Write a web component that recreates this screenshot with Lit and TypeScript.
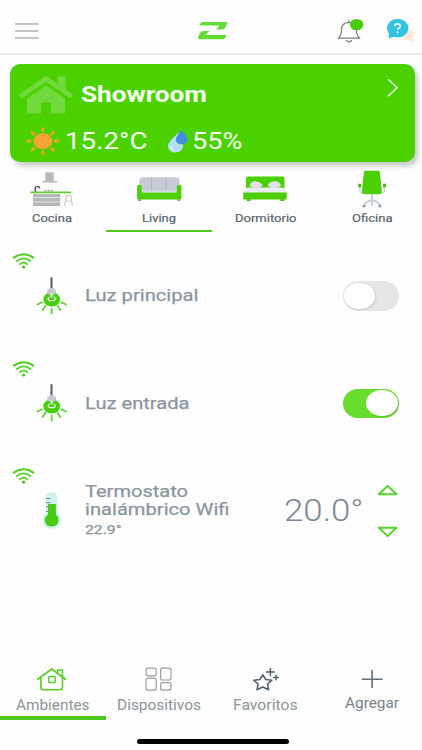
import { LitElement, html, css, svg } from "lit";
import { customElement, property } from "lit/decorators.js";

/** One line of text stretched horizontally to a given width. */
@customElement("wide-text")
class WideText extends LitElement {
  @property() text = "";
  @property({ type: Number }) width = 0;
  static styles = css`
    :host { display: block; white-space: nowrap; }
    .t { display: inline-block; transform-origin: 0 50%; }
  `;
  render() {
    return html`<span class="t">${this.text}</span>`;
  }
  updated() {
    const t = this.renderRoot.querySelector(".t") as HTMLElement;
    t.style.transform = "";
    const natural = t.getBoundingClientRect().width;
    this.style.width = `${this.width}px`;
    t.style.transform = `scaleX(${this.width / natural})`;
  }
}

const wt = (text: string, width: number, cls = "") =>
  html`<wide-text class=${cls} .text=${text} .width=${width}></wide-text>`;

const icon = (x: number, y: number, w: number, h: number, body: unknown) =>
  html`<svg width=${w} height=${h} viewBox="${x} ${y} ${w} ${h}" fill="none">${body}</svg>`;

const menu = icon(15, 20, 24, 22, svg`
  <path d="M15.5 24H38M15.5 31H38M15.5 38H38" stroke="#afb4ba" stroke-width="1.6" stroke-linecap="round"/>`);

const logo = icon(196, 20, 34, 22, svg`
  <path d="M203 22H226Q228.2 22 227 24L225 27.7Q224 29.4 222 29.4H216L219.5 25.6H199.3Q200.6 22 203 22Z" fill="#62dc35"/>
  <path d="M203.5 31H209.4L205.5 34.9H226.5Q225 39.2 223 39.2H200Q197.1 39.2 198.3 36.6L200 33Q201 31 203.5 31Z" fill="#62dc35"/>`);

const bell = icon(336, 16, 28, 28, svg`
  <path d="M338.2 38.2Q341.5 35.5 341.4 30.5Q341.3 22.5 348.9 22.3Q356.6 22.5 356.5 30.5Q356.5 35.5 359.8 38.2Z" stroke="#7c7f85" stroke-width="1.2" stroke-linejoin="round"/>
  <path d="M348.9 22.2V20.3M346 40.2Q349 43.4 352 40.2" stroke="#7c7f85" stroke-width="1.3"/>
  <ellipse cx="356.6" cy="24.6" rx="6.7" ry="5.7" fill="#45cc0b"/>`);

const help = icon(385, 16, 30, 28, svg`
  <path d="M407 29.5Q413.2 28.5 413.6 34.5Q413.6 37 412.8 38.5L413.4 41.8L409.5 40.6Q404 40.7 401.5 37Z" fill="#fde8d6"/>
  <ellipse cx="397.7" cy="28.1" rx="10.7" ry="9.3" fill="#32c4de"/>
  <path d="M389 32L388.6 38.6L396.4 36Z" fill="#32c4de"/>
  <path d="M394.7 26.2Q394.7 23.9 397.6 23.9Q400.4 24 400.3 26.2Q400.2 27.6 398.6 28.3Q397.6 28.8 397.6 30" stroke="#eafcff" stroke-width="1.6"/>
  <circle cx="397.6" cy="32.2" r="1" fill="#eafcff"/>`);

const house = icon(18, 75, 56, 40, svg`
  <path d="M20.2 96.8L46 78.8L71.8 96.8" stroke="#72d93f" stroke-width="4.8" stroke-linejoin="round"/>
  <path d="M58 76.5H65.5V90L58 85Z" fill="#72d93f"/>
  <path d="M27 98.6L46 85.4L65 98.6V113.6H51V102.5H41V113.6H27Z" fill="#72d93f"/>`);

const chevron = icon(385, 76, 16, 24, svg`
  <path d="M388 79.2L397.2 87.8L388 96.3" stroke="#e4ffd7" stroke-width="1.5"/>`);

const sun = icon(26, 126, 34, 30, svg`
  <ellipse cx="42.7" cy="141.2" rx="9.3" ry="8" fill="#ffa336"/>
  <path d="M42.7 128.6V130.4M42.7 152V153.8M27.7 141.2H30M55.4 141.2H57.8M32 132.6L33.8 134M53.3 132.6L51.6 134M32 150L33.8 148.5M53.3 150L51.6 148.5" stroke="#f6a22b" stroke-width="2.9" stroke-linecap="round"/>`);

const drops = icon(166, 128, 24, 26, svg`
  <path d="M178.3 132.8C174.5 137 168 141.5 168 146.3C168 150 171.2 152.4 175.4 152.4C179.7 152.4 183 150 183 146.3C183 141.5 180 137 178.3 132.8Z" fill="#b5dff8"/>
  <path d="M181.8 130C179 134 175.8 136.5 175.8 139.8C175.8 142.6 178.5 144.3 181.5 144.3C184.8 144.3 187.4 142.5 187.4 139.8C187.4 136 184 133.5 181.8 130Z" fill="#3f8fe4"/>
  <path d="M170.5 146.5Q171 149.5 174 150.3" stroke="#e4f6ff" stroke-width="1.4"/>`);

const kitchen = icon(29, 168, 48, 40, svg`
  <path d="M46.3 172.3H54.8V181.2H46.3Z" fill="#b9b9b9"/>
  <path d="M43.5 181.8H58" stroke="#b3b3b3" stroke-width="1.4"/>
  <path d="M36.3 192V188.2Q36.3 186.4 38.3 186.4Q40.6 186.3 40.6 188.6" stroke="#4a4d50" stroke-width="1.4"/>
  <path d="M45.5 190.8H55" stroke="#777" stroke-width="1" stroke-dasharray="2 1.2"/>
  <path d="M31.5 192.4H72" stroke="#5fce35" stroke-width="1.7"/>
  <path d="M34 194H61.2V206H34Z" fill="#b7b7b7"/>
  <path d="M34 197.6H61.2M34 202H61.2" stroke="#e8e8e8" stroke-width="1"/>
  <path d="M67 195.5H72.2M67.4 195.5L65.6 206M71.8 195.5L73.4 206M66.5 201H73" stroke="#c9c9c9" stroke-width="1.2"/>`);

const sofa = icon(135.2, 168, 48, 40, svg`
  <path d="M139.6 192V180.5Q139.6 177.3 143.5 177.3H176Q179.8 177.3 179.8 180.5V192Z" fill="#c6cdd7"/>
  <path d="M151.8 178V190M166.2 178V190" stroke="#adb6c1" stroke-width="1"/>
  <path d="M141 191.4H178.5" stroke="#d5dbe2" stroke-width="1.8"/>
  <path d="M137.3 186.5Q137.3 184.8 139.6 184.8Q141.9 184.8 141.9 186.5V192.4H177V186.5Q177 184.8 179.3 184.8Q181.6 184.8 181.6 186.5V198Q181.6 199.5 179.8 199.5H139.1Q137.3 199.5 137.3 198Z" fill="#4bd006"/>
  <path d="M138.3 200.2H141.3M177.5 200.2H180.6" stroke="#9b6f55" stroke-width="1.3"/>`);

const bed = icon(241.4, 168, 48, 40, svg`
  <path d="M246.3 189V178.4Q246.3 176.6 248.3 176.6H282.9Q284.9 176.6 284.9 178.4V189Z" fill="#4bd006"/>
  <path d="M245.2 188.2Q246 187.5 251 187.6H280Q286 187.5 286.4 189.5L286.8 193.4H244.2Z" fill="#ececf1"/>
  <path d="M249.8 185Q252 180.8 256 181.2Q261 181.6 263 185.2Q261.5 188 256.5 188Q251.5 188 249.8 185ZM268 185.2Q270.5 181.4 275 181.2Q279.5 181 281.4 185Q280 188 275 188Q270 188 268 185.2Z" fill="#e2e1e8"/>
  <path d="M243.6 192.6H287.2V198.6Q287.2 199.6 286 199.6H284.8V201H280.6V199.6H251.2V201H247V199.6H244.8Q243.6 199.6 243.6 198.6Z" fill="#4bd006"/>`);

const chair = icon(348.4, 168, 48, 40, svg`
  <path d="M364.3 172Q364.3 170.7 366 170.7H378.5Q380 170.7 380.2 172L382.2 191.5Q382.4 194.2 380 194.2H364.5Q362 194.2 362.3 191.5Z" fill="#4bd006"/>
  <path d="M360.2 187V191Q360.3 192.5 362.5 192.6M384.8 187V191Q384.7 192.5 382.5 192.6" stroke="#cbd2db" stroke-width="1.4"/>
  <path d="M358.6 183.8H361.6V187.2H358.6ZM383.4 183.8H386.4V187.2H383.4Z" fill="#45bd17"/>
  <path d="M372.3 194.2V206M372.3 200Q366 201.5 364.7 205M372.3 200Q378.6 201.5 380 205" stroke="#c6ced8" stroke-width="1.8"/>
  <circle cx="364.4" cy="206" r="1.6" fill="#8b99ab"/><circle cx="380.3" cy="206" r="1.6" fill="#8b99ab"/>`);

const wifi = icon(12, 252, 23, 18, svg`
  <path d="M13.9 257.6Q23.6 251 33.4 257.6" stroke="#52ca20" stroke-width="2" stroke-linecap="round"/>
  <path d="M16.9 260.9Q23.6 256 30.4 260.9" stroke="#52ca20" stroke-width="1.8" stroke-linecap="round"/>
  <path d="M20 264.1Q23.6 261.2 27.2 264.1" stroke="#52ca20" stroke-width="1.8" stroke-linecap="round"/>
  <ellipse cx="23.6" cy="267" rx="1.8" ry="1.5" fill="#52ca20"/>`);

const lamp = icon(34, 276, 36, 40, svg`
  <path d="M51.5 277.3V288.5" stroke="#555a60" stroke-width="2"/>
  <ellipse cx="51.7" cy="299.4" rx="8.4" ry="7.2" fill="#48ce0c"/>
  <path d="M49 288H54V289.5H56V293L54.4 294.6H49L47.3 293V289.5H49Z" fill="#c3c8d2"/>
  <path d="M51.6 293.5V297.4" stroke="#eef5ee" stroke-width="2.2"/>
  <path d="M49.4 296.8Q46.8 299.2 49.6 300.6H53.8Q56.6 299.2 54 296.8" stroke="#fff" stroke-width="1.1"/>
  <path d="M42 302.2L37.4 304.4M45.6 305.6L42.6 310M51.6 308.6V313.4M57.4 305.8L60.4 310M61.2 302.2L66 304.6" stroke="#58d128" stroke-width="1.7" stroke-linecap="round"/>`);

const thermo = icon(34, 490, 36, 42, svg`
  <path d="M46 497.6Q46 492.2 51.6 492.2Q57.2 492.2 57.2 497.6V512.8Q61 516 61 520.6Q60.5 528.8 51.8 528.8Q43 528.8 42.4 520.6Q42.4 516 46 512.8Z" fill="#cdf2f1"/>
  <path d="M48 504H55.9V514.4Q58.7 516.6 58.5 520.4Q57.8 526.4 51.8 526.4Q45.4 526.4 44.8 520.4Q44.8 516.5 48 514.4Z" fill="#48cc12"/>
  <path d="M46 498.5H50.4M46 502.8H50M46 506.8H49.6M46 511.5H49.6" stroke="#5b9d84" stroke-width="1.1"/>`);

const up = icon(376, 483, 23, 14, svg`
  <path d="M378.8 494.2L387.6 486L396.5 494.2Z" stroke="#57d42c" stroke-width="1.9" stroke-linejoin="round"/>`);
const down = icon(376, 525, 23, 14, svg`
  <path d="M378.8 527.8L387.6 536L396.5 527.8Z" stroke="#57d42c" stroke-width="1.9" stroke-linejoin="round"/>`);

const navHome = icon(36, 666, 34, 26, svg`
  <path d="M38.8 679.3L52.7 669L66.4 679.3" stroke="#57cb27" stroke-width="1.7" stroke-linecap="round" stroke-linejoin="round"/>
  <path d="M41.9 678V687.3Q41.9 689.8 44.5 689.8H60.9Q63.5 689.8 63.5 687.3V670H58.6V672.4" stroke="#57cb27" stroke-width="1.6"/>
  <rect x="49.6" y="676.6" width="6.6" height="5.8" rx=".8" stroke="#57cb27" stroke-width="1.5"/>`);

const navDevices = icon(142.2, 666, 32, 26, svg`
  <g stroke="#999ea4" stroke-width="1.2">
  <rect x="145.2" y="668.2" width="10.2" height="7.6" rx="2"/><rect x="145.2" y="678.2" width="10.2" height="12" rx="2"/>
  <rect x="159.8" y="668.2" width="10.4" height="11.8" rx="2"/><rect x="159.8" y="682.7" width="10.4" height="7.5" rx="2"/></g>`);

const navStar = icon(249.4, 666, 32, 26, svg`
  <path d="M262.2 674.9L265.2 679.5L271.2 680.3L266.9 684L268 689.7L262.2 687L256.4 689.7L257.5 684L253.2 680.3L259.2 679.5Z" stroke="#4f626e" stroke-width="1.6" stroke-linejoin="round"/>
  <path d="M269.8 668V676M265.2 672H274.4M275.4 674.8V680.2M272.5 677.5H278.3" stroke="#4f626e" stroke-width="1.5"/>`);

const navPlus = icon(359.2, 666, 26, 26, svg`
  <path d="M372.3 670V688M362 679.2H382.8" stroke="#5d6f7a" stroke-width="1.6"/>`);

const tabs = [
  { label: "Cocina", width: 40, art: kitchen },
  { label: "Living", width: 34, art: sofa, active: true },
  { label: "Dormitorio", width: 61.5, art: bed },
  { label: "Oficina", width: 40.5, art: chair },
];

const nav = [
  { label: "Ambientes", width: 73.5, art: navHome, active: true },
  { label: "Dispositivos", width: 84, art: navDevices },
  { label: "Favoritos", width: 64.5, art: navStar },
  { label: "Agregar", width: 54, art: navPlus, cls: "raised" },
];

@customElement("app-root")
class AppRoot extends LitElement {
  static styles = css`
    :host {
      display: flex; flex-direction: column; box-sizing: border-box;
      width: 422px; height: 750px; overflow: hidden; background: #fefefe;
      font-family: Roboto, "Liberation Sans", sans-serif; color: #87939c;
    }
    svg { display: block; flex: none; }
    header {
      box-sizing: border-box; height: 55px; padding: 16px 7px 0 15px;
      display: grid; grid-template-columns: 181px 1fr auto auto; align-items: start;
      border-bottom: 2px solid #e7e7e9;
    }
    .menu, .logo { padding-top: 4px; }
    .help { padding-left: 21px; }
    .card {
      box-sizing: border-box; height: 98px; margin: 9px 7.5px 0 10px; padding: 11px 14px 0 8px;
      border-radius: 10px; background: #4bd100; color: #f6fff0;
      box-shadow: 3px 4px 5px rgba(60, 60, 60, .28);
    }
    .head { display: flex; align-items: flex-start; height: 40px; }
    .head svg:last-child { margin-top: 1px; }
    .name { font-weight: 700; font-size: 22px; line-height: 39px; margin-left: 7px; flex: 1; }
    .climate { display: flex; align-items: center; height: 30px; margin: 11px 0 0 8px; }
    .reading { font-size: 23px; line-height: 30px; padding-top: 2px; }
    .t { margin-left: 5px; }
    .drops { margin: 0 2px 0 18px; }
    .tabs { display: grid; grid-template-columns: repeat(4, 106.6px); height: 70px; padding-top: 6px; box-sizing: border-box; margin-left: -1px; }
    .tab { display: flex; flex-direction: column; align-items: center; box-sizing: border-box; border-bottom: 2.6px solid transparent; }
    .on { border-bottom-color: #4fc91e; }
    .tab wide-text { font-size: 11.8px; font-weight: 400; line-height: 14px; color: #57636b; margin-top: 3px; -webkit-text-stroke: .2px #57636b; }
    .row { box-sizing: border-box; height: 107.5px; display: flex; align-items: center; padding-right: 23px; }
    .devices { margin-top: 10px; }
    .wifi { align-self: flex-start; padding: 10px 0 0 12px; width: 22px; }
    .wifi svg { overflow: visible; }
    .info { margin-left: 14.5px; flex: 1; font-size: 17px; line-height: 18.6px; font-weight: 400; color: #8996a0; -webkit-text-stroke: .25px #8996a0; }
    .small { font-size: 13px; line-height: 21px; }
    .switch { box-sizing: border-box; width: 56.5px; height: 29.5px; border-radius: 15px / 14.75px; padding: 1.6px 1.3px; background: #e6e6e9; display: flex; }
    .knob { width: 31.5px; height: 26px; border-radius: 50%; background: #fff; box-shadow: 1px 1px 2px rgba(0, 0, 0, .14); }
    .lit { background: #69dd2d; justify-content: flex-end; }
    .target { font-size: 31px; font-weight: 300; line-height: 36px; color: #7b8893; padding-top: 1px; }
    .steps { display: flex; flex-direction: column; gap: 28px; margin: 0 0 0 13px; }
    nav { margin-top: auto; display: grid; grid-template-columns: repeat(4, 106.7px); height: 54px; margin-left: -1px; }
    .item { display: flex; flex-direction: column; align-items: center; box-sizing: border-box; border-bottom: 4px solid transparent; font-size: 14.3px; line-height: 18px; color: #8c949b; }
    .item.on { border-bottom-color: #4fc91e; }
    .item wide-text { margin-top: 3.5px; }
    .item.raised wide-text { margin-top: 2px; color: #78838b; }
    .bar { width: 151.5px; height: 5px; border-radius: 3px; background: #000; margin: 19px 0 6px 137px; flex: none; }
  `;

  private device(name: string, width: number, on: boolean) {
    return html`<div class="row">
      <div class="wifi">${wifi}</div>${lamp}
      <div class="info">${wt(name, width)}</div>
      <div class="switch ${on ? "lit" : ""}"><div class="knob"></div></div>
    </div>`;
  }

  render() {
    return html`
      <header>
        <div class="menu">${menu}</div>
        <div class="logo">${logo}</div>
        <div>${bell}</div>
        <div class="help">${help}</div>
      </header>
      <section class="card">
        <div class="head">${house}${wt("Showroom", 126, "name")}${chevron}</div>
        <div class="climate">
          ${sun}${wt("15.2°C", 82.5, "reading t")}
          <div class="drops">${drops}</div>${wt("55%", 50.5, "reading")}
        </div>
      </section>
      <div class="tabs">
        ${tabs.map((t) => html`<div class="tab ${t.active ? "on" : ""}">${t.art}${wt(t.label, t.width)}</div>`)}
      </div>
      <div class="devices">
        ${this.device("Luz principal", 113.5, false)}
        ${this.device("Luz entrada", 104.5, true)}
        <div class="row">
          <div class="wifi">${wifi}</div>${thermo}
          <div class="info">
            ${wt("Termostato", 103)}${wt("inalámbrico Wifi", 144.5)}${wt("22.9°", 36.5, "small")}
          </div>
          ${wt("20.0°", 79.5, "target")}
          <div class="steps">${up}${down}</div>
        </div>
      </div>
      <nav>
        ${nav.map((n) => html`<div class="item ${n.active ? "on" : ""} ${n.cls ?? ""}">${n.art}${wt(n.label, n.width)}</div>`)}
      </nav>
      <div class="bar"></div>
    `;
  }
}
